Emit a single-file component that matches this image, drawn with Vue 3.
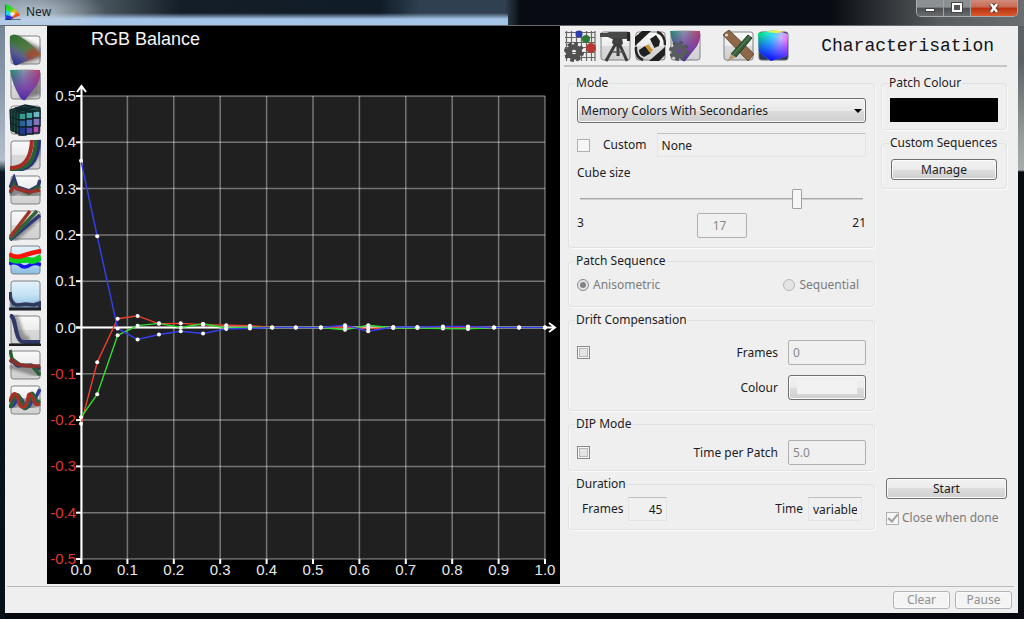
<script setup>
import { computed, ref } from 'vue'

const mode = ref('Memory Colors With Secondaries')
const sequence = ref('anisometric')
const custom = ref(false)
const cubeSize = ref(17)
const drift = ref(false)
const dip = ref(false)
const closeWhenDone = ref(true)

const plot = { left: 34, top: 70, width: 464, height: 463 }

const levels = [0, 0.035, 0.079, 0.122, 0.168, 0.215, 0.263, 0.313, 0.364, 0.412, 0.463,
  0.517, 0.569, 0.619, 0.673, 0.725, 0.78, 0.834, 0.89, 0.944, 1]

const series = [
  {
    name: 'red',
    color: '#f0402c',
    values: [-0.208, -0.075, 0.019, 0.025, 0.008, 0.009, 0.006, 0.005, 0.004, 0, 0, 0, 0.001, -0.002, 0, 0, 0, 0.001, 0, 0, 0]
  },
  {
    name: 'green',
    color: '#30dc30',
    values: [-0.194, -0.144, -0.017, 0.004, 0.009, 0, 0.008, -0.001, 0, 0, 0, 0, -0.005, 0.005, -0.001, -0.001, -0.002, -0.003, 0, 0, 0]
  },
  {
    name: 'blue',
    color: '#3440f0',
    values: [0.36, 0.197, -0.002, -0.026, -0.015, -0.008, -0.013, -0.003, -0.002, 0, 0, 0, 0.005, -0.008, 0.001, 0.001, 0.002, 0.002, 0, 0, 0]
  }
]

const scaleX = (v) => plot.left + v * plot.width
const scaleY = (v) => plot.top + (0.5 - v) * plot.height

const xTicks = Array.from({ length: 11 }, (_, i) => i / 10)
const yTicks = Array.from({ length: 11 }, (_, i) => (5 - i) / 10)

const lines = computed(() => series.map((s) => ({
  ...s,
  points: s.values.map((v, i) => ({ x: scaleX(levels[i]), y: scaleY(v) }))
})))

const toPath = (points) => points.map((p) => `${p.x},${p.y}`).join(' ')

const charts = [
  'CIE xy', 'CIE uv', 'Cube', 'Gamma', 'Delta gamma', 'Tone response',
  'RGB balance', 'Luminance', 'Contrast', 'Error', 'Noise'
]
const activeChart = ref('RGB balance')
</script>

<template>
  <div class="window">
    <header class="titlebar">
      <svg class="app-icon" viewBox="0 0 16 16" aria-hidden="true">
        <path d="M1 16V0C6 2 12 6 15 11L5 16z" fill="url(#appHue)" />
        <path d="M1 9l5 1 2 4-3 2H1z" fill="#2438e8" />
        <path d="M1 6l6 3-2 3-4-1z" fill="#18d8e8" />
        <path d="M5 9l4-1 1 2-4 3z" fill="#f8e8f4" />
        <path d="M0 1v15h16" fill="none" stroke="#101010" />
      </svg>
      <span class="title">New</span>
      <div class="window-controls">
        <button type="button" aria-label="Minimize">
          <svg width="14" height="10" viewBox="0 0 14 10"><rect x="2.5" y="5.5" width="9" height="3" fill="#fff" stroke="#444" /></svg>
        </button>
        <button type="button" aria-label="Maximize">
          <svg width="14" height="12" viewBox="0 0 14 12"><rect x="3" y="2" width="8" height="7" fill="none" stroke="#444" stroke-width="4" /><rect x="3" y="2" width="8" height="7" fill="#555" stroke="#fff" stroke-width="2" /></svg>
        </button>
        <button type="button" class="close" aria-label="Close">
          <svg width="16" height="12" viewBox="0 0 16 12"><path d="M5 2l6 8M11 2L5 10" stroke="#5a2a20" stroke-width="4.5" /><path d="M5 2l6 8M11 2L5 10" stroke="#fff" stroke-width="2.6" /></svg>
        </button>
      </div>
    </header>

    <div class="client">
      <main class="workspace">
        <nav class="sidebar">
          <button
            v-for="(name, index) in charts"
            :key="name"
            type="button"
            class="icon-button"
            :aria-label="name"
            @click="activeChart = name"
          >
            <svg viewBox="0 0 32 32">
              <rect x="2" y="2" width="29" height="28" rx="2.5" :fill="index === 6 || index === 7 ? 'url(#frameBlue)' : 'url(#frame)'" stroke="#7c8084" />
              <g v-if="index === 0">
                <path d="M8 1L32 14V24L12 30z" fill="#333" opacity=".5" filter="url(#soft)" />
                <path d="M1 2Q5 -1 10 2 24 10 32 21L8 31Q5 32 4 28 0 18 1 2z" fill="url(#xyBase)" />
                <path d="M1 2Q5 -1 10 2 24 10 32 21L8 31Q5 32 4 28 0 18 1 2z" fill="url(#xyLow)" />
                <path d="M16 20l8-7 8 8-14 6z" fill="#b0382c" opacity=".6" filter="url(#soft)" />
              </g>
              <g v-else-if="index === 1">
                <path d="M10 27L31 4v22l-15 4z" fill="#444" opacity=".6" filter="url(#soft)" />
                <path d="M1 1Q15 0 31 1 32 9 28 16L16 31Q13 32 11 28 3 15 1 1z" fill="url(#uvBase)" />
                <path d="M1 1Q15 0 31 1 32 9 28 16L16 31Q13 32 11 28 3 15 1 1z" fill="url(#uvLow)" />
              </g>
              <g v-else-if="index === 2" stroke="#10202a" stroke-width="1.3">
                <path d="M1 6L16 1 31 4 30 27 13 31 2 26z" fill="#1c4c3c" />
                <path d="M10 9h7v7h-7z" fill="#309c8c" /><path d="M17 8h7v7h-7z" fill="#40a8a4" /><path d="M24 7h7v7h-7z" fill="#6cb8c0" />
                <path d="M10 16h7v7h-7z" fill="#28649c" /><path d="M17 15h7v8h-7z" fill="#4878b8" /><path d="M24 14h7v8h-7z" fill="#8474c0" />
                <path d="M10 23h7v8h-7z" fill="#203890" /><path d="M17 23h7v7h-7z" fill="#5848b0" /><path d="M24 22h6v7h-6z" fill="#b84cb4" />
                <path d="M4 7v21M7 8v22M1 13l9 3M1 19l9 4M6 4l16 4M11 3l16 5M4 7l17-5M7 8l19-5" fill="none" />
              </g>
              <g v-else-if="index === 3" fill="none" stroke-width="4">
                <path d="M3 31Q30 29 31 1" stroke="#223" stroke-width="5" opacity=".5" filter="url(#soft)" />
                <path d="M1 31C20 32 29 24 30 1" stroke="#26347c" />
                <path d="M1 30C18 31 26 23 27 1" stroke="#286034" />
                <path d="M1 29C15 29 22 20 23 1" stroke="#a82c24" />
              </g>
              <g v-else-if="index === 4" fill="none" stroke-width="3.5">
                <path d="M1 21l7-5 11 4 12-2" stroke="#333" stroke-width="8" opacity=".5" filter="url(#soft)" />
                <path d="M1 14l4-10 3 9 12 4 9-5 2-6" stroke="#303870" />
                <path d="M1 19l4-9 3 4 12 5 11-7" stroke="#285c38" />
                <path d="M1 18l4-5 4 2 11 3 11-2" stroke="#9c3028" />
              </g>
              <g v-else-if="index === 5" fill="none" stroke-width="3.5">
                <path d="M3 31L31 7" stroke="#444" stroke-width="7" opacity=".5" filter="url(#soft)" />
                <path d="M1 31L31 6" stroke="#2c3878" />
                <path d="M1 30L28 2" stroke="#306434" />
                <path d="M1 28L21 2" stroke="#a03428" />
              </g>
              <g v-else-if="index === 6" fill="none" stroke-width="4">
                <path d="M0 20q6-3 11 1 4 4 10 0 5-3 11 0" stroke="#1414e8" stroke-width="3.5" />
                <path d="M0 14q7 4 13 2 7-1 10 1 5-1 9-4" stroke="#10d020" stroke-width="6" />
                <path d="M0 10q6 4 13 2 6-2 10-3l9-2" stroke="#fc1408" stroke-width="4.5" />
              </g>
              <g v-else-if="index === 7" fill="none">
                <path d="M1 13l2 9 6 3h14l8-3v8H1z" fill="#2c3450" opacity=".4" filter="url(#soft)" />
                <path d="M1 13q0 13 8 13l8-1 8 1 6-2v5" stroke="#303858" stroke-width="3.5" />
                <path d="M0 30h32" stroke="#202028" stroke-width="3" />
              </g>
              <g v-else-if="index === 8" fill="none">
                <path d="M5 2C11 16 9 24 20 27" stroke="#444" stroke-width="8" opacity=".45" filter="url(#soft)" />
                <path d="M1 1C8 3 5 28 15 28h16" stroke="#303868" stroke-width="4" />
                <path d="M0 31h32" stroke="#202024" stroke-width="3" />
              </g>
              <g v-else-if="index === 9" fill="none" stroke-width="3.5">
                <path d="M1 17l30 2v7z" stroke="#444" stroke-width="5" opacity=".5" filter="url(#soft)" />
                <path d="M1 11l8 6 13-1 9 4" stroke="#303868" />
                <path d="M1 1l2 9 8 6 12 1 8 9" stroke="#286034" />
                <path d="M1 10l7 5 10 2h13" stroke="#8c302c" />
              </g>
              <g v-else fill="none" stroke-width="3.5">
                <path d="M2 22l8-7 8 8 12-8" stroke="#333" stroke-width="10" opacity=".5" filter="url(#soft)" />
                <path d="M1 21c4 5 6-9 10-7s3 13 8 9 3-13 7-8l5-10" stroke="#2c3c98" />
                <path d="M1 24C5 13 7 8 10 12s3 15 7 12 3-18 7-14 2 10 7 7" stroke="#246434" />
                <path d="M1 18C4 5 8 10 9 15s3 11 7 7 2-15 6-11 2 12 9 9" stroke="#a83028" />
              </g>
            </svg>
          </button>
        </nav>

        <section class="chart">
          <svg viewBox="0 0 513 558" preserveAspectRatio="xMidYMin meet" role="img" :aria-label="activeChart">
            <defs>
              <linearGradient id="appHue" x2=".6" y2="1"><stop offset="0" stop-color="#10d838" /><stop offset=".4" stop-color="#40d820" /><stop offset=".6" stop-color="#e8c010" /><stop offset="1" stop-color="#f01828" /></linearGradient>
              <linearGradient id="frame" x2="0" y2="1"><stop offset="0" stop-color="#fafafa" /><stop offset=".5" stop-color="#ececec" /><stop offset=".5" stop-color="#dadada" /><stop offset="1" stop-color="#d0d0d0" /></linearGradient>
              <linearGradient id="frameBlue" x2="0" y2="1"><stop offset="0" stop-color="#e4f2fb" /><stop offset=".5" stop-color="#c4e2f4" /><stop offset="1" stop-color="#88bce0" /></linearGradient>
              <linearGradient id="xyBase" x2=".6" y2="1"><stop offset="0" stop-color="#306c34" /><stop offset=".6" stop-color="#547c44" /><stop offset="1" stop-color="#a07048" /></linearGradient>
              <linearGradient id="xyLow" x1=".45" y1=".45" x2=".1" y2="1"><stop offset="0" stop-color="#4c6c8c" stop-opacity="0" /><stop offset=".4" stop-color="#5c5c90" /><stop offset="1" stop-color="#202c90" /></linearGradient>
              <linearGradient id="uvBase"><stop offset="0" stop-color="#188c6c" /><stop offset=".45" stop-color="#8898ac" /><stop offset="1" stop-color="#b83c70" /></linearGradient>
              <linearGradient id="uvLow" x2="0" y2="1"><stop offset="0" stop-color="#6428a0" stop-opacity="0" /><stop offset=".6" stop-color="#7438a8" stop-opacity=".8" /><stop offset="1" stop-color="#4c28a4" /></linearGradient>
              <linearGradient id="cubeHue" x1="0" x2="1" y1=".3" y2=".6"><stop offset="0" stop-color="#08f078" /><stop offset=".4" stop-color="#38d8fc" /><stop offset=".7" stop-color="#c8b0ff" /><stop offset="1" stop-color="#fc50fc" /></linearGradient>
              <linearGradient id="cubeLow" x1=".6" x2=".3" y2="1"><stop offset=".2" stop-color="#1030ff" stop-opacity="0" /><stop offset=".9" stop-color="#1018f8" /></linearGradient>
              <filter id="soft"><feGaussianBlur stdDeviation="1.8" /></filter>
            </defs>

            <text class="chart-title" x="44" y="19">RGB Balance</text>
            <rect class="plot-area" :x="plot.left" :y="plot.top" :width="plot.width" :height="plot.height" />
            <g class="grid">
              <line v-for="t in xTicks" :key="'gx' + t" :x1="scaleX(t)" :x2="scaleX(t)" :y1="plot.top" :y2="plot.top + plot.height" />
              <line v-for="t in yTicks" :key="'gy' + t" :x1="plot.left" :x2="plot.left + plot.width" :y1="scaleY(t)" :y2="scaleY(t)" />
            </g>
            <g class="axis">
              <path d="M34.5 538V61M30 66l4.5-6 4.5 6" />
              <path d="M29 301.5H508M502 297l6 4.500-6 4.500" />
              <line v-for="t in yTicks" :key="'ty' + t" x1="29" x2="34" :y1="scaleY(t)" :y2="scaleY(t)" />
              <line v-for="t in xTicks" :key="'tx' + t" :x1="scaleX(t)" :x2="scaleX(t)" y1="533" y2="538" />
            </g>
            <g class="labels">
              <text
                v-for="t in yTicks"
                :key="'ly' + t"
                :class="{ negative: t < 0 }"
                x="29"
                :y="scaleY(t) + 5"
                text-anchor="end"
              >{{ t.toFixed(1) }}</text>
              <text v-for="t in xTicks" :key="'lx' + t" :x="scaleX(t)" y="549" text-anchor="middle">{{ t.toFixed(1) }}</text>
            </g>
            <polyline v-for="line in lines" :key="line.name" class="series" :points="toPath(line.points)" :stroke="line.color" />
            <g v-for="line in lines" :key="'p' + line.name" class="markers">
              <circle v-for="(p, i) in line.points" :key="i" :cx="p.x" :cy="p.y" r="2" />
            </g>
          </svg>
        </section>

        <section class="panel">
          <div class="toolbar">
            <button type="button" class="icon-button" aria-label="Calibration settings">
              <svg viewBox="0 0 32 32">
                <path d="M2.5 1v30M7.5 1v30M12.5 1v30M17.5 1v30M22.5 1v30M27.5 1v30M31 1v30M1 2.500h30M1 7.500h30M1 12.500h30M1 17.500h30M1 22.500h30M1 27.500h30" stroke="#686868" stroke-width="1.2" />
                <circle cx="15" cy="4" r="3.5" fill="#2c3cac" /><circle cx="22" cy="9" r="4" fill="#307838" /><circle cx="27" cy="18" r="5" fill="#b83834" />
                <circle cx="10" cy="22" r="8.5" fill="none" stroke="#4c4c4c" stroke-width="3" stroke-dasharray="3.6 3.076" />
                <circle cx="10" cy="22" r="5" fill="none" stroke="#505050" stroke-width="5.5" />
              </svg>
            </button>
            <button type="button" class="icon-button" aria-label="Instrument">
              <svg viewBox="0 0 32 32">
                <rect x="2" y="2" width="29" height="28" rx="2.5" fill="url(#frame)" stroke="#7c8084" />
                <path d="M1 3h7l2-1h18v7H13L9 7H1z" fill="#484848" /><path d="M28 2h3v9h-3z" fill="#242424" />
                <path d="M14 8h9l1 6-6 3-5-4z" fill="#404040" />
                <path d="M17 13L7 31M19 13v13M20 13l8 18" stroke="#3c3c3c" stroke-width="3" />
                <path d="M13 22h12" stroke="#555" stroke-width="1.5" />
              </svg>
            </button>
            <button type="button" class="icon-button" aria-label="Connect">
              <svg viewBox="0 0 32 32">
                <rect x="2" y="2" width="29" height="28" rx="2.5" fill="url(#frame)" stroke="#7c8084" />
                <path d="M1 7L8 1h9L1 16zM31 17v8l-6 6H15z" fill="#202020" />
                <path d="M2 17Q1 27 9 30M31 15Q31 4 23 2" fill="none" stroke="#282828" stroke-width="2.5" />
                <path d="M5 20l6-4 6 7-7 4q-5-2-5-7z" fill="#202020" /><path d="M11 16l4-2 4 6-3 3z" fill="#c89430" />
                <path d="M16 9l6-4 4 6-1 5-5 2z" fill="#202020" /><path d="M14 14l3-2 3 5-2 2z" fill="#ddd" />
              </svg>
            </button>
            <button type="button" class="icon-button" aria-label="Colour space settings">
              <svg viewBox="0 0 32 32">
                <rect x="2" y="2" width="29" height="28" rx="2.5" fill="url(#frame)" stroke="#7c8084" />
                <path d="M1 1Q15 0 31 1 32 9 28 16L16 31Q13 32 11 28 3 15 1 1z" fill="url(#uvBase)" />
                <path d="M1 1Q15 0 31 1 32 9 28 16L16 31Q13 32 11 28 3 15 1 1z" fill="url(#uvLow)" />
                <circle cx="10" cy="21" r="8.5" fill="none" stroke="#505458" stroke-width="3" stroke-dasharray="3.6 3.076" />
                <circle cx="10" cy="21" r="5" fill="none" stroke="#585c60" stroke-width="5.5" />
              </svg>
            </button>
            <button type="button" class="icon-button group-start" aria-label="Edit">
              <svg viewBox="0 0 32 32">
                <rect x="2" y="2" width="29" height="28" rx="2.5" fill="url(#frame)" stroke="#7c8084" />
                <path d="M1 5l6-5 25 24-6 7z" fill="#8c6848" stroke="#6c4c34" /><circle cx="4.5" cy="5" r="1.5" fill="#ddd" />
                <path d="M9 24L26 5l4 3-16 19z" fill="#38603c" stroke="#243c28" /><path d="M9 24l5 3-9 5z" fill="#b89c78" />
                <path d="M11 25L28 6" stroke="#5c8858" />
              </svg>
            </button>
            <button type="button" class="icon-button" aria-label="Characterisation">
              <svg viewBox="0 0 32 32">
                <rect x="2" y="2" width="29" height="28" rx="2.5" fill="#283860" stroke="#606870" />
                <path d="M1 3L17 0 31 4 30 26 14 31 2 22z" fill="url(#cubeHue)" />
                <path d="M1 3L17 0 31 4 30 26 14 31 2 22z" fill="url(#cubeLow)" />
                <path d="M9 2l9-2 9 2-8 1z" fill="#f0f048" />
              </svg>
            </button>
            <h1>Characterisation</h1>
          </div>

          <div class="settings">
            <form class="column" @submit.prevent>
              <fieldset class="mode">
                <legend>Mode</legend>
                <div class="select-wrap">
                  <select v-model="mode" aria-label="Mode">
                    <option>Memory Colors With Secondaries</option>
                  </select>
                </div>
                <div class="row custom-row">
                  <input id="custom" v-model="custom" type="checkbox" class="plain">
                  <label for="custom">Custom</label>
                  <input class="sunken" type="text" value="None" aria-label="Custom sequence" readonly>
                </div>
                <label class="cube-label" for="cube">Cube size</label>
                <input id="cube" v-model="cubeSize" class="slider" type="range" min="3" max="21">
                <div class="range-row">
                  <span>3</span>
                  <input class="field range-value" type="text" :value="cubeSize" aria-label="Cube size value" disabled>
                  <span class="range-max">21</span>
                </div>
              </fieldset>

              <fieldset class="patch-sequence">
                <legend>Patch Sequence</legend>
                <div class="row spread">
                  <label class="choice"><input v-model="sequence" type="radio" value="anisometric" disabled>Anisometric</label>
                  <label class="choice"><input v-model="sequence" type="radio" value="sequential" disabled>Sequential</label>
                </div>
              </fieldset>

              <fieldset class="drift">
                <legend>Drift Compensation</legend>
                <div class="row">
                  <input v-model="drift" type="checkbox" aria-label="Drift Compensation">
                  <label class="push" for="drift-frames">Frames</label>
                  <input id="drift-frames" class="field" type="text" value="0" disabled>
                </div>
                <div class="row">
                  <label class="push" for="drift-colour">Colour</label>
                  <button id="drift-colour" type="button" class="button colour-button"><span></span></button>
                </div>
              </fieldset>

              <fieldset class="dip">
                <legend>DIP Mode</legend>
                <div class="row">
                  <input v-model="dip" type="checkbox" aria-label="DIP Mode">
                  <label class="push" for="dip-time">Time per Patch</label>
                  <input id="dip-time" class="field" type="text" value="5.0" disabled>
                </div>
              </fieldset>

              <fieldset class="duration">
                <legend>Duration</legend>
                <div class="row">
                  <label for="frames">Frames</label>
                  <input id="frames" class="sunken frames" type="text" value="45" readonly>
                  <label class="push" for="time">Time</label>
                  <input id="time" class="sunken time" type="text" value="variable" readonly>
                </div>
              </fieldset>
            </form>

            <aside class="column">
              <fieldset>
                <legend>Patch Colour</legend>
                <div class="swatch"></div>
              </fieldset>
              <fieldset class="sequences">
                <legend>Custom Sequences</legend>
                <button type="button" class="button">Manage</button>
              </fieldset>
              <div class="start">
                <button type="button" class="button">Start</button>
                <label class="choice"><input v-model="closeWhenDone" type="checkbox" class="plain" disabled>Close when done</label>
              </div>
            </aside>
          </div>
        </section>
      </main>

      <footer class="statusbar">
        <button type="button" class="button" disabled>Clear</button>
        <button type="button" class="button" disabled>Pause</button>
      </footer>
    </div>
  </div>
</template>

<style>
body {
  margin: 0;
  background: #05080c;
}
</style>

<style scoped>
* {
  box-sizing: border-box;
}

.window {
  display: flex;
  flex-direction: column;
  min-height: 100vh;
  padding: 0 6px 6px 5px;
  background:
    linear-gradient(#5c6264 0, #5c6264 60px, #9a9e9e 140px, #a8acac 170px, #080c10 172px) right / 6px 100% no-repeat,
    linear-gradient(#6c7c8c 0, #8c9cac 90px, #b4c0cc 160px, #0c1824 172px, #081018 100%) left / 5px 100% no-repeat,
    #05080c;
  color: #1c1c24;
  font-family: "Noto Sans", "Noto Sans CJK SC", sans-serif;
  font-size: 12px;
  line-height: 16px;
}

button,
input,
select {
  margin: 0;
  font: inherit;
  color: inherit;
}

.titlebar {
  display: flex;
  align-items: center;
  height: 26px;
  margin: 0 -6px 0 -5px;
  padding: 0 6px 2px 5px;
  border-bottom: 1px solid #686c70;
  background:
    radial-gradient(ellipse 70px 26px at 36px 13px, rgba(205, 215, 225, 0.75), rgba(160, 175, 190, 0)) no-repeat,
    linear-gradient(rgba(168, 200, 236, 0) 13px, #a4c4e8 19px) left / 508px 100% no-repeat,
    linear-gradient(90deg, #7c8c9c, #445058 110px, #141e28 180px, #101c28 380px, #304050 420px, #304050 505px, #080c12 520px, #080c12 830px, #585c5e 940px, #6a6e70);
}

.app-icon {
  width: 16px;
  height: 16px;
}

.title {
  margin-left: 5px;
  color: #20262c;
}

.window-controls {
  display: flex;
  align-self: flex-start;
  height: 17px;
  margin-left: auto;
  overflow: hidden;
  border: 1px solid #a8acae;
  border-top: 0;
  border-radius: 0 0 5px 5px;
}

.window-controls button {
  display: grid;
  place-items: center;
  width: 27px;
  padding: 0;
  border: 0;
  border-right: 1px solid #a0a4a6;
  background: linear-gradient(#8c9092 45%, #4c5052 50%, #686c6e);
}

.window-controls .close {
  width: 46px;
  border-right: 0;
  background: linear-gradient(#d08c7c 0, #c86850 45%, #b83010 50%, #d85c30);
}

.client {
  display: flex;
  flex: 1;
  flex-direction: column;
  background: #efefef;
}

.workspace {
  display: grid;
  flex: 1;
  grid-template-columns: 42px minmax(0, 1fr) 458px;
}

.sidebar {
  display: flex;
  flex-direction: column;
  gap: 3px;
  padding: 8px 0 0 4px;
}

.icon-button {
  display: block;
  width: 32px;
  height: 32px;
  padding: 0;
  border: 0;
  background: none;
}

.icon-button svg {
  display: block;
}

.chart {
  background: #000;
}

.chart svg {
  display: block;
  width: 100%;
  font-family: "Liberation Sans", Arial, sans-serif;
}

.chart-title {
  font-size: 18px;
  fill: #f4f4f4;
}

.plot-area {
  fill: #202020;
}

.grid line {
  stroke: rgba(255, 255, 255, 0.38);
  stroke-width: 1.5;
}

.axis {
  fill: none;
  stroke: #fff;
  stroke-width: 2;
}

.labels {
  font-size: 15px;
  fill: #e8e8e8;
}

.labels .negative {
  fill: #e0382e;
}

.series {
  fill: none;
  stroke-width: 1.4;
}

.markers {
  fill: #fff;
}

.panel {
  padding: 0 11px 0 4px;
}

.toolbar {
  display: flex;
  align-items: center;
  gap: 3px;
  height: 41px;
  border-bottom: 2px solid #c4c4c4;
}

.group-start {
  margin-left: 18px;
}

h1 {
  margin: 0 13px 0 auto;
  color: #10141c;
  font: 18px "Liberation Mono", monospace;
}

.settings {
  display: grid;
  grid-template-columns: minmax(0, 1fr) 126px;
  gap: 6px;
  padding: 8px 0 0 4px;
}

.column {
  display: flex;
  flex-direction: column;
  gap: 5px;
}

fieldset {
  min-width: 0;
  margin: 0;
  padding: 7px 8px;
  border: 1px solid #dde2e4;
  border-radius: 4px;
  box-shadow: inset 1px 0 #fafafa, 1px 1px #fafafa;
}

legend {
  height: 16px;
  margin-left: -2px;
  padding: 0 1px;
  white-space: nowrap;
}

.row {
  display: flex;
  align-items: center;
}

.spread {
  justify-content: space-between;
}

.push {
  margin-left: auto;
}

.mode {
  padding-bottom: 9px;
}

.select-wrap {
  position: relative;
}

.select-wrap::after {
  position: absolute;
  top: 11px;
  right: 4px;
  border: 4px solid transparent;
  border-top-color: #000;
  border-bottom: 0;
  content: "";
  pointer-events: none;
}

select {
  display: block;
  width: 100%;
  height: 25px;
  padding: 0 3px;
  appearance: none;
  border: 1px solid #707070;
  border-radius: 3px;
  background: linear-gradient(#f2f2f2, #e9e9e9 50%, #dcdcdc 50%, #cfcfcf);
  box-shadow: inset 0 0 0 1px #f8f8f8;
}

.custom-row {
  margin-top: 10px;
}

.custom-row label {
  margin: 0 10px 0 13px;
}

.sunken {
  min-width: 0;
  height: 24px;
  padding: 0 4px;
  border: 1px solid #e2e6e8;
  border-top-color: #c0c0c0;
  background: #f0f0f0;
}

.custom-row .sunken {
  flex: 1;
}

.cube-label {
  display: block;
  margin-top: 8px;
}

.slider {
  display: block;
  width: calc(100% - 6px);
  height: 20px;
  margin: 8px 3px 4px;
  appearance: none;
  background: linear-gradient(#a8a8a8 50%, #d0d0d0 50%) center / 100% 2px no-repeat;
}

.slider::-webkit-slider-thumb {
  width: 10px;
  height: 20px;
  appearance: none;
  border: 1px solid #a0a0a0;
  border-radius: 1px;
  background: #f6f6f6;
}

.range-row {
  display: grid;
  grid-template-columns: 1fr 50px 1fr;
}

.range-row span {
  padding-top: 2px;
}

.range-row .range-value {
  width: 50px;
  padding-right: 8px;
  text-align: center;
}

.range-row .range-max {
  text-align: right;
}

.field {
  width: 78px;
  height: 25px;
  padding: 0 4px;
  border: 1px solid #b0b0b0;
  border-radius: 2px;
  background: #f0f0f0;
  color: #888;
}

.choice {
  display: flex;
  align-items: center;
}

.choice:has(:disabled) {
  color: #7c7c7c;
}

input[type="checkbox"],
input[type="radio"] {
  display: grid;
  flex: none;
  place-items: center;
  width: 13px;
  height: 13px;
  appearance: none;
  border: 1px solid #888;
  background: #e4e4e4;
  box-shadow: inset 0 0 0 1px #f6f6f6, inset 0 0 0 2px #b4b8ba;
}

input[type="radio"] {
  width: 12px;
  height: 12px;
  margin-right: 4px;
  border-color: #b8b8b8;
  border-radius: 50%;
  box-shadow: none;
}

input[type="radio"]:checked {
  border-color: #888;
}

input[type="radio"]:checked::before {
  width: 6px;
  height: 6px;
  border-radius: 50%;
  background: #808488;
  content: "";
}

input[type="checkbox"].plain {
  border-color: #b0b0b0;
  background: #f6f6f6;
  box-shadow: none;
}

.choice .plain {
  margin-right: 3px;
}

input[type="checkbox"].plain:checked::before {
  width: 4px;
  height: 8px;
  margin-top: -2px;
  border: solid #a0a0a0;
  border-width: 0 2px 2px 0;
  content: "";
  transform: rotate(40deg);
}

.patch-sequence {
  padding: 8px 15px 13px 8px;
}

.drift {
  padding: 12px 8px 10px;
}

.drift .row + .row {
  margin-top: 10px;
}

.drift .push,
.dip .push {
  margin-right: 10px;
}

.dip {
  padding: 8px 8px 5px;
}

.duration {
  padding: 5px 8px 8px;
}

.duration .row {
  padding: 0 4px 0 5px;
}

.frames {
  width: 39px;
  margin-left: 5px;
  text-align: right;
}

.time {
  width: 54px;
  margin-left: 5px;
}

.button {
  display: block;
  width: 100%;
  height: 21px;
  padding: 0;
  border: 1px solid #707070;
  border-radius: 3px;
  background: linear-gradient(#f2f2f2, #ebebeb 50%, #dddddd 50%, #cfcfcf);
  box-shadow: inset 0 0 0 1px #fafafa;
  line-height: 17px;
}

.button:disabled {
  border-color: #b0b4b6;
  background: #f4f4f4;
  color: #909090;
}

.colour-button {
  width: 78px;
  height: 25px;
  padding: 5px 8px;
}

.colour-button span {
  display: block;
  height: 13px;
  background: #f2f2f2;
}

.swatch {
  height: 24px;
  background: #000;
}

.sequences {
  padding: 8px 9px;
}

.start {
  margin: auto 0 4px 5px;
}

.start .choice {
  margin-top: 11px;
}

.statusbar {
  display: flex;
  justify-content: flex-end;
  gap: 5px;
  margin: 2px 4px 0 2px;
  padding: 4px 2px 4px 0;
  border-top: 1px solid #b8b8b8;
}

.statusbar .button {
  width: 57px;
  height: 18px;
  line-height: 16px;
}
</style>
